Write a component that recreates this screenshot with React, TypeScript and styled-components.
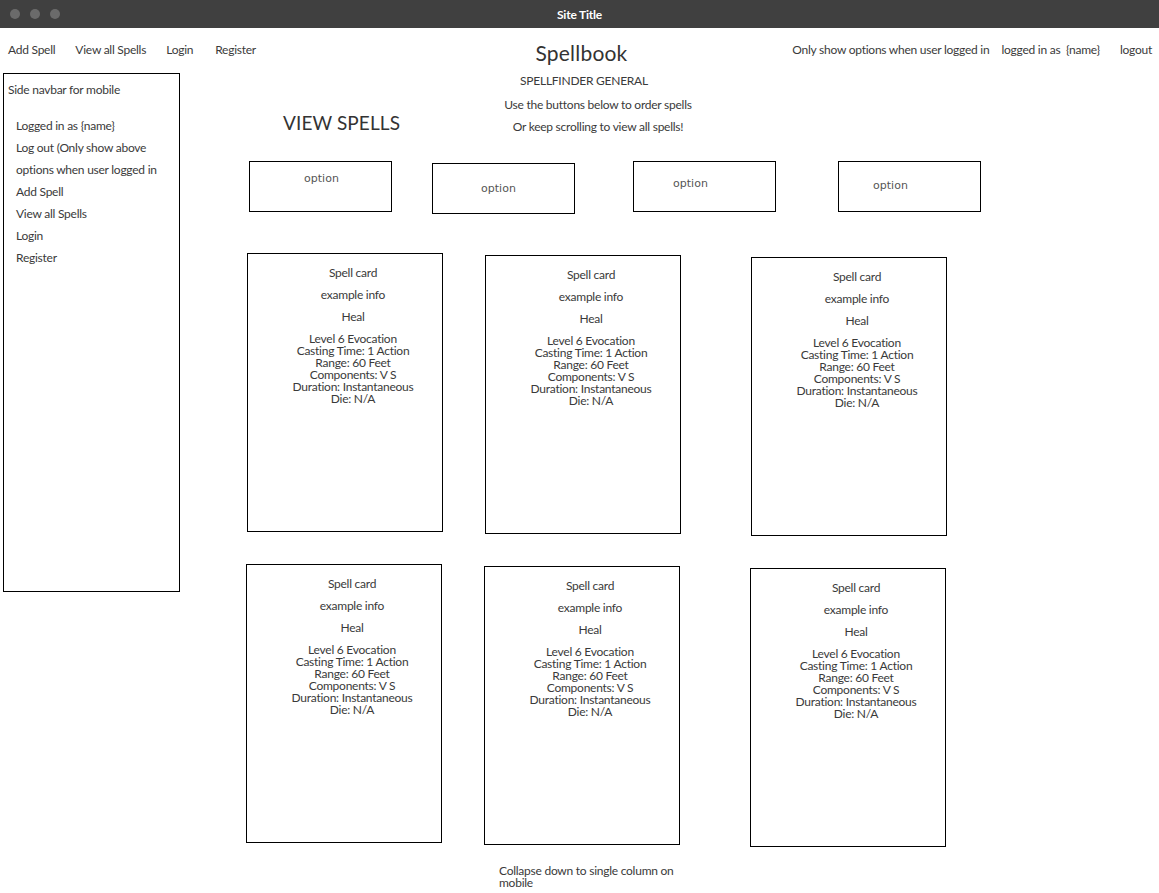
import React from "react";
import styled, { createGlobalStyle } from "styled-components";

const Global = createGlobalStyle`
  html, body { margin: 0; padding: 0; background: #fff; }
  body {
    font-family: Lato, "Open Sans", sans-serif;
    color: #3a3a3a;
    -webkit-font-smoothing: antialiased;
  }
  * { box-sizing: border-box; }
`;

const Window = styled.div`
  width: 1159px;
  height: 893px;
  overflow: hidden;
  background: #fff;
`;

const TitleBar = styled.div`
  height: 28px;
  background: #404040;
  display: grid;
  grid-template-columns: 1fr auto 1fr;
  align-items: center;
`;

const Dots = styled.div`
  display: flex;
  gap: 10px;
  padding-left: 10px;
`;

const Dot = styled.span`
  width: 10px;
  height: 10px;
  border-radius: 50%;
  background: #6b6b6b;
`;

const WindowTitle = styled.div`
  color: #fff;
  font-size: 12px;
  font-weight: 700;
  letter-spacing: -0.2px;
`;

const Header = styled.header`
  height: 45px;
  display: grid;
  grid-template-columns: 1fr auto 1fr;
  align-items: start;
`;

const NavGroup = styled.nav<{ $right?: boolean }>`
  display: flex;
  justify-content: ${(p) => (p.$right ? "flex-end" : "flex-start")};
  padding: 14px ${(p) => (p.$right ? "7px" : "0")} 0 ${(p) => (p.$right ? "0" : "8px")};
  font-size: 12px;
  line-height: 16px;
  letter-spacing: -0.25px;
  white-space: nowrap;
`;

const NavItem = styled.span<{ $gap?: number }>`
  margin-left: ${(p) => p.$gap ?? 0}px;
`;

const Brand = styled.h1`
  margin: 11px 0 0;
  font-size: 21px;
  line-height: 28px;
  font-weight: 400;
  letter-spacing: 0.2px;
  color: #333;
  padding-left: 4px;
`;

const Body = styled.div`
  display: flex;
  align-items: flex-start;
`;

const Sidebar = styled.aside`
  margin-left: 3px;
  width: 177px;
  height: 519px;
  border: 1px solid #000;
  padding: 8px 0 0 4px;
  font-size: 12px;
  letter-spacing: -0.25px;
`;

const SideTitle = styled.div`
  line-height: 16px;
`;

const SideList = styled.ul`
  list-style: none;
  margin: 17px 0 0;
  padding: 0 0 0 8px;
`;

const SideItem = styled.li`
  line-height: 22px;
`;

const Content = styled.main`
  flex: 1;
`;

const Intro = styled.section`
  display: grid;
  grid-template-columns: 191px 240px;
  padding-left: 103px;
`;

const PageHeading = styled.h2`
  margin: 38px 0 0;
  font-size: 19px;
  line-height: 24px;
  font-weight: 400;
  letter-spacing: 0.1px;
  color: #333;
`;

const Subtitles = styled.div`
  display: flex;
  flex-direction: column;
  font-size: 12px;
  line-height: 16px;
  letter-spacing: -0.25px;
  text-align: center;
  white-space: nowrap;
`;

const SubLine = styled.div<{ $top: number; $dx: number }>`
  margin-top: ${(p) => p.$top}px;
  padding-left: ${(p) => Math.max(0, p.$dx * 2)}px;
  padding-right: ${(p) => Math.max(0, -p.$dx * 2)}px;
`;

const OptionsRow = styled.div`
  display: flex;
  align-items: flex-start;
  margin-top: 26px;
  padding-left: 69px;
`;

const OptionBox = styled.button<{ $ml: number; $mt: number; $ty: number; $tx: number }>`
  all: unset;
  box-sizing: border-box;
  display: flex;
  justify-content: center;
  align-items: flex-start;
  width: 143px;
  height: 51px;
  margin-left: ${(p) => p.$ml}px;
  margin-top: ${(p) => p.$mt}px;
  padding-top: ${(p) => p.$ty - 8}px;
  padding-left: ${(p) => Math.max(0, p.$tx * 2)}px;
  padding-right: ${(p) => Math.max(0, -p.$tx * 2)}px;
  border: 1px solid #000;
  font-family: "DejaVu Sans", Verdana, sans-serif;
  font-size: 11px;
  line-height: 16px;
  color: #555;
`;

const CardGrid = styled.div`
  display: flex;
  flex-direction: column;
  margin-top: 39px;
  gap: 28px;
`;

const CardRow = styled.div<{ $pl: number }>`
  display: flex;
  align-items: flex-start;
  padding-left: ${(p) => p.$pl}px;
`;

const Card = styled.article<{ $ml: number; $mt: number }>`
  width: 196px;
  height: 279px;
  margin-left: ${(p) => p.$ml}px;
  margin-top: ${(p) => p.$mt}px;
  border: 1px solid #000;
  padding: 11px 0 0 16px;
  display: flex;
  flex-direction: column;
  align-items: center;
  font-size: 12px;
  letter-spacing: -0.25px;
  text-align: center;
`;

const CardLine = styled.div`
  line-height: 16px;
  margin-bottom: 6px;
`;

const CardDetails = styled.div`
  line-height: 12px;
  margin-top: 2px;
`;

const Footnote = styled.p`
  margin: 18px 0 0 319px;
  width: 180px;
  font-size: 12px;
  line-height: 12px;
  letter-spacing: -0.25px;
`;

const options = [
  { ml: 0, mt: 0, ty: 17, tx: 1 },
  { ml: 40, mt: 2, ty: 25, tx: -5 },
  { ml: 58, mt: 0, ty: 22, tx: -14 },
  { ml: 62, mt: 0, ty: 24, tx: -19 },
];

const cardRows = [
  { pl: 67, cards: [{ ml: 0, mt: 0 }, { ml: 42, mt: 2 }, { ml: 70, mt: 4 }] },
  { pl: 66, cards: [{ ml: 0, mt: 0 }, { ml: 42, mt: 2 }, { ml: 70, mt: 4 }] },
];

const details = [
  "Level 6 Evocation",
  "Casting Time: 1 Action",
  "Range: 60 Feet",
  "Components: V S",
  "Duration: Instantaneous",
  "Die: N/A",
];

function SpellCard({ ml, mt }: { ml: number; mt: number }) {
  return (
    <Card $ml={ml} $mt={mt}>
      <CardLine>Spell card</CardLine>
      <CardLine>example info</CardLine>
      <CardLine>Heal</CardLine>
      <CardDetails>
        {details.map((d) => (
          <div key={d}>{d}</div>
        ))}
      </CardDetails>
    </Card>
  );
}

export default function App() {
  return (
    <Window>
      <Global />
      <TitleBar>
        <Dots>
          <Dot />
          <Dot />
          <Dot />
        </Dots>
        <WindowTitle>Site Title</WindowTitle>
        <div />
      </TitleBar>
      <Header>
        <NavGroup>
          <NavItem>Add Spell</NavItem>
          <NavItem $gap={20}>View all Spells</NavItem>
          <NavItem $gap={20}>Login</NavItem>
          <NavItem $gap={22}>Register</NavItem>
        </NavGroup>
        <Brand>Spellbook</Brand>
        <NavGroup $right>
          <NavItem>Only show options when user logged in</NavItem>
          <NavItem $gap={12}>logged in as&nbsp; {"{name}"}</NavItem>
          <NavItem $gap={20}>logout</NavItem>
        </NavGroup>
      </Header>
      <Body>
        <Sidebar>
          <SideTitle>Side navbar for mobile</SideTitle>
          <SideList>
            <SideItem>Logged in as {"{name}"}</SideItem>
            <SideItem>Log out (Only show above</SideItem>
            <SideItem>options when user logged in</SideItem>
            <SideItem>Add Spell</SideItem>
            <SideItem>View all Spells</SideItem>
            <SideItem>Login</SideItem>
            <SideItem>Register</SideItem>
          </SideList>
        </Sidebar>
        <Content>
          <Intro>
            <PageHeading>VIEW SPELLS</PageHeading>
            <Subtitles>
              <SubLine $top={0} $dx={-10}>SPELLFINDER GENERAL</SubLine>
              <SubLine $top={8} $dx={4}>Use the buttons below to order spells</SubLine>
              <SubLine $top={6} $dx={4}>Or keep scrolling to view all spells!</SubLine>
            </Subtitles>
          </Intro>
          <OptionsRow>
            {options.map((o, i) => (
              <OptionBox key={i} $ml={o.ml} $mt={o.mt} $ty={o.ty} $tx={o.tx}>
                option
              </OptionBox>
            ))}
          </OptionsRow>
          <CardGrid>
            {cardRows.map((r, ri) => (
              <CardRow key={ri} $pl={r.pl}>
                {r.cards.map((c, ci) => (
                  <SpellCard key={ci} ml={c.ml} mt={c.mt} />
                ))}
              </CardRow>
            ))}
          </CardGrid>
          <Footnote>Collapse down to single column on mobile</Footnote>
        </Content>
      </Body>
    </Window>
  );
}
